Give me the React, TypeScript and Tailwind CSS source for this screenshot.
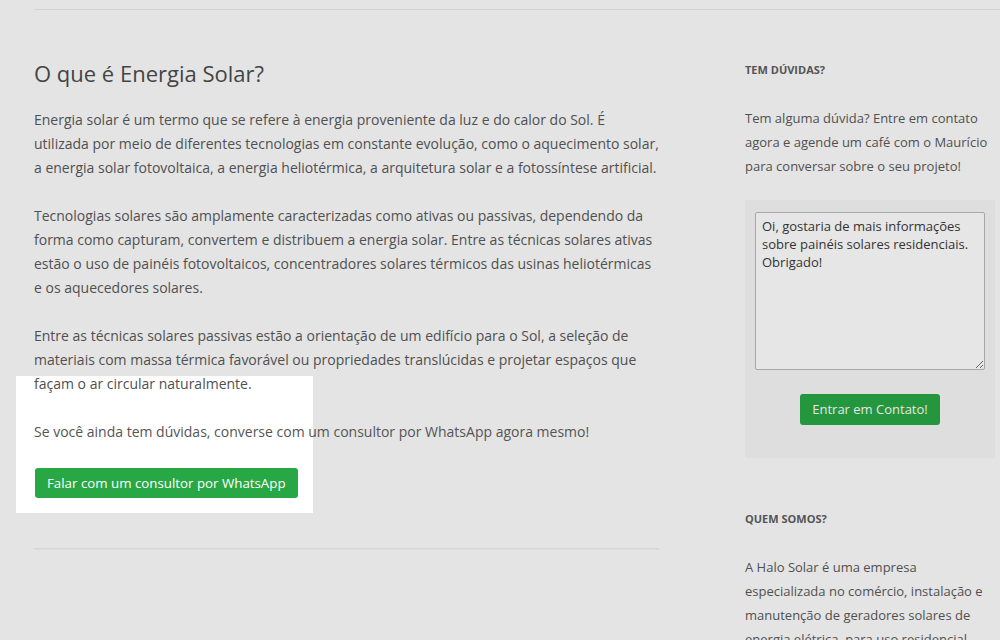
import React from "react"

const font = { fontFamily: '"Open Sans", "Liberation Sans", sans-serif' }

export default function App() {
  return (
    <div
      className="relative w-[1000px] h-[640px] overflow-hidden bg-[#e4e4e4] text-[#505050]"
      style={font}
    >
      {/* spotlight: the undimmed part of the page */}
      <div className="absolute left-[16px] top-[376px] w-[297px] h-[137px] bg-white" />

      <div className="relative">
        <div className="ml-[34px] mt-[9px] h-px bg-[#d3d3d3]" />

        <div className="flex">
          {/* Main column */}
          <main className="ml-[34px] w-[625px]">
            <h2 className="mt-[48px] text-[22px] leading-[30px] text-[#444]">
              O que é Energia Solar?
            </h2>
            <div className="mt-[20px] text-[14px] leading-[24px] space-y-[24px]">
              <p>
                Energia solar é um termo que se refere à energia proveniente da luz e do calor do Sol. É
                utilizada por meio de diferentes tecnologias em constante evolução, como o aquecimento solar,
                a energia solar fotovoltaica, a energia heliotérmica, a arquitetura solar e a fotossíntese artificial.
              </p>
              <p>
                Tecnologias solares são amplamente caracterizadas como ativas ou passivas, dependendo da
                forma como capturam, convertem e distribuem a energia solar. Entre as técnicas solares ativas
                estão o uso de painéis fotovoltaicos, concentradores solares térmicos das usinas heliotérmicas
                e os aquecedores solares.
              </p>
              <p>
                Entre as técnicas solares passivas estão a orientação de um edifício para o Sol, a seleção de
                materiais com massa térmica favorável ou propriedades translúcidas e projetar espaços que
                façam o ar circular naturalmente.
              </p>
              <p className="text-[#555]">
                Se você ainda tem dúvidas, converse com um consultor por WhatsApp agora mesmo!
              </p>
            </div>
            <button className="mt-[24px] ml-px h-[30px] px-[12px] rounded-[3px] bg-[#28a745] text-white text-[13.3px] leading-[30px]">
              Falar com um consultor por WhatsApp
            </button>
            <div className="mt-[50px] h-[2px] border-t border-[#d6d6d6] bg-[#dcdcdc]" />
          </main>

          {/* Sidebar */}
          <aside className="ml-[86px] w-[250px]">
            <h3 className="mt-[52px] text-[11px] leading-[16px] font-bold uppercase text-[#555]">
              Tem dúvidas?
            </h3>
            <p className="mt-[28px] text-[13px] leading-[24px] pr-[4px]">
              Tem alguma dúvida? Entre em contato agora e agende um café com o Maurício para conversar sobre o seu projeto!
            </p>
            <div className="mt-[22px] bg-[#dedede] px-[10px] pt-[12px] pb-[33px] flex flex-col items-center">
              <textarea
                className="w-[230px] h-[158px] border border-[#a8a8a8] rounded-[2px] bg-[#e6e6e6] px-[6px] py-[4px] text-[13px] leading-[18px] text-[#333] outline-none"
                style={font}
                defaultValue={"Oi, gostaria de mais informações sobre painéis solares residenciais. Obrigado!"}
              />
              <button className="mt-[24px] h-[31px] px-[12px] rounded-[3px] bg-[#24963e] text-[#e6e6e6] text-[13px]">
                Entrar em Contato!
              </button>
            </div>
            <h3 className="mt-[53px] text-[11px] leading-[16px] font-bold uppercase text-[#555]">
              Quem somos?
            </h3>
            <p className="mt-[28px] text-[13px] leading-[24px]">
              A Halo Solar é uma empresa especializada no comércio, instalação e manutenção de geradores solares de energia elétrica, para uso residencial.
            </p>
          </aside>
        </div>
      </div>
    </div>
  )
}
